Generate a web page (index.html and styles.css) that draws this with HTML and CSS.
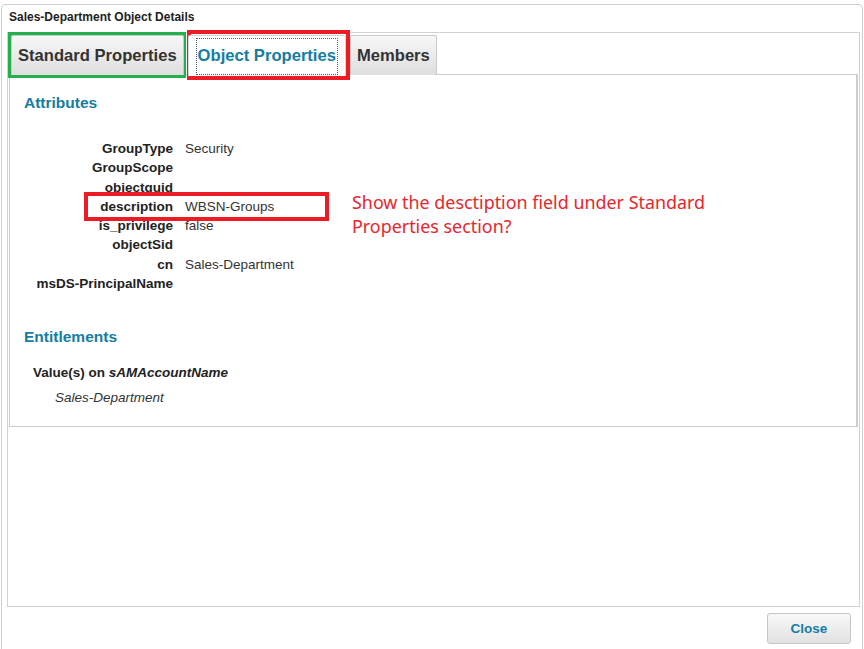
FILE: index.html
```html
<!DOCTYPE html>
<html>
<head>
<meta charset="utf-8">
<link rel="stylesheet" href="styles.css">
</head>
<body>
<div class="dialog">
  <div class="title">Sales-Department Object Details</div>
  <div class="tabbox">
    <div class="tabs">
      <div class="tab">Standard Properties</div>
      <div class="tab active"><span class="focus">Object Properties</span></div>
      <div class="tab">Members</div>
    </div>
    <div class="panel">
      <h2 class="heading">Attributes</h2>
      <div class="attrs">
        <div class="lbl">GroupType</div><div class="val">Security</div>
        <div class="lbl">GroupScope</div><div class="val"></div>
        <div class="lbl">objectguid</div><div class="val"></div>
        <div class="lbl">description</div><div class="val">WBSN-Groups</div>
        <div class="lbl">is_privilege</div><div class="val">false</div>
        <div class="lbl">objectSid</div><div class="val"></div>
        <div class="lbl">cn</div><div class="val">Sales-Department</div>
        <div class="lbl">msDS-PrincipalName</div><div class="val"></div>
      </div>
      <h2 class="heading ent">Entitlements</h2>
      <div class="valueon">Value(s) on <i>sAMAccountName</i></div>
      <div class="entval">Sales-Department</div>
    </div>
  </div>
  <div class="footer">
    <button class="btn">Close</button>
  </div>
</div>

<div class="anno green-box"></div>
<div class="anno red-box tabs-box"></div>
<div class="anno red-box desc-box"></div>
<div class="anno note">Show the desctiption field under Standard Properties section?</div>
</body>
</html>
```

FILE: styles.css
```css
html, body {
  margin: 0;
  padding: 0;
  background: #ffffff;
  overflow: hidden;
}
body {
  font-family: "Liberation Sans", Arial, sans-serif;
  color: #222;
  height: 649px;
  position: relative;
}
.dialog {
  margin: 4px 1px 0 1px;
  border: 1px solid #cfcfcf;
  border-bottom: none;
  border-radius: 5px 5px 0 0;
  height: 650px;
  padding: 0 2px 0 5px;
  box-sizing: border-box;
  background: #fff;
}
.title {
  height: 27px;
  line-height: 25px;
  font-size: 12px;
  font-weight: bold;
  color: #222;
  padding-left: 2px;
}
.tabbox {
  border: 1px solid #d2d2d2;
  height: 575px;
  box-sizing: border-box;
  padding: 2px 1px 0 1px;
  display: flex;
  flex-direction: column;
}
.tabs {
  display: flex;
  gap: 4px;
  padding-left: 2px;
  height: 40px;
  position: relative;
  z-index: 1;
  margin-bottom: -1px;
}
.tab {
  height: 40px;
  box-sizing: border-box;
  border: 1px solid #c9c9c9;
  border-bottom: none;
  background: linear-gradient(#f7f7f7, #dedede);
  padding: 0 6px;
  font-size: 16.6px;
  font-weight: bold;
  color: #333;
  display: flex;
  align-items: center;
  border-radius: 2px 2px 0 0;
}
.tab.active {
  background: #fff;
  color: #137ea2;
  padding: 0 7px;
  height: 41px;
  border-color: #d6d6d6;
}
.focus {
  border: 1px dotted #4a5a8a;
  padding: 7px 1px 8px 1px;
}
.panel {
  border: 1px solid #cdcdcd;
  border-right: 2px solid #cdcdcd;
  height: 353px;
  box-sizing: border-box;
  padding: 18px 0 0 14px;
}
.heading {
  margin: 0;
  font-size: 15.5px;
  font-weight: bold;
  color: #137ea2;
  line-height: 20px;
}
.attrs {
  margin-top: 26px;
  display: grid;
  grid-template-columns: 149px 1fr;
  column-gap: 12px;
  font-size: 13.5px;
  line-height: 19.3px;
}
.lbl {
  text-align: right;
  font-weight: bold;
  color: #222;
}
.val {
  color: #333;
}
.ent {
  margin-top: 34px;
}
.valueon {
  margin-top: 16px;
  padding-left: 9px;
  font-size: 13.5px;
  font-weight: bold;
  line-height: 20px;
  color: #222;
}
.entval {
  margin-top: 5px;
  padding-left: 31px;
  font-size: 13.5px;
  font-style: italic;
  line-height: 20px;
  color: #333;
}
.footer {
  display: flex;
  justify-content: flex-end;
  padding: 6px 9px 0 0;
}
.btn {
  width: 84px;
  height: 31px;
  border: 1px solid #c6c6c6;
  border-radius: 3px;
  background: linear-gradient(#f8f8f8, #e2e2e2);
  font-family: "Liberation Sans", Arial, sans-serif;
  font-size: 13.5px;
  font-weight: bold;
  color: #137ea2;
  padding: 0;
}
.anno {
  position: absolute;
  box-sizing: border-box;
}
.green-box {
  left: 8px;
  top: 32px;
  width: 178px;
  height: 46px;
  border: 4px solid #22b14c;
}
.red-box {
  border: 4px solid #ed1c24;
}
.tabs-box {
  left: 187px;
  top: 30px;
  width: 163px;
  height: 50px;
}
.desc-box {
  left: 84px;
  top: 192px;
  width: 245px;
  height: 29px;
}
.note {
  left: 352px;
  top: 190px;
  width: 400px;
  font-family: "Noto Sans", "Open Sans", sans-serif;
  font-size: 17.9px;
  line-height: 24px;
  color: #e8262b;
}
```
